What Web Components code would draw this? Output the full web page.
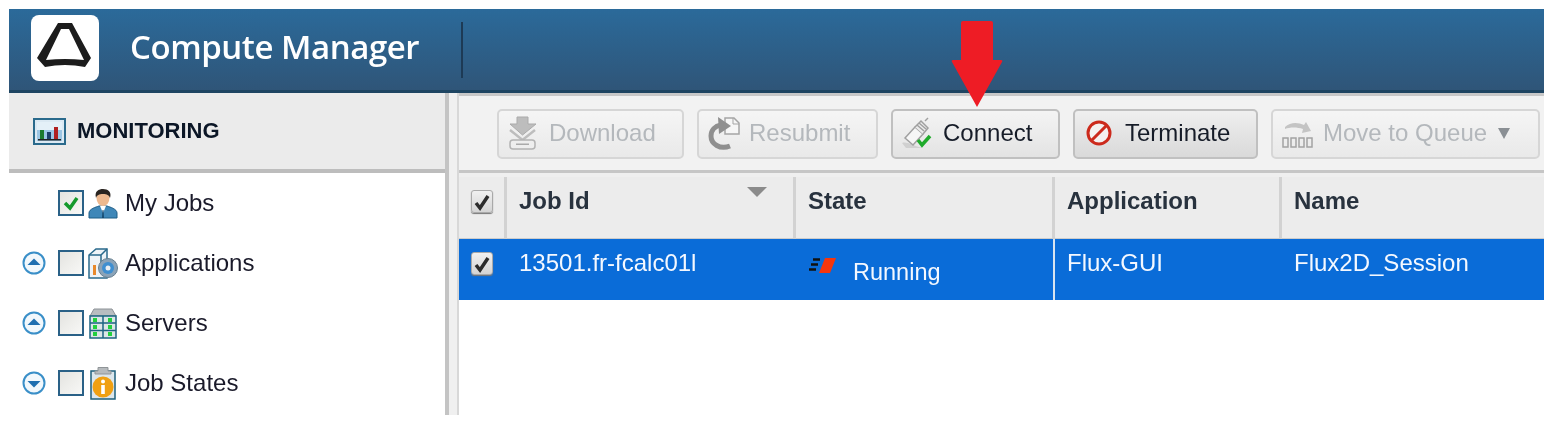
<!DOCTYPE html>
<html>
<head>
<meta charset="utf-8">
<style>
html, body { margin: 0; background: #fff; }
body { font-family: "Liberation Sans", Arial, sans-serif; overflow: hidden; }
</style>
</head>
<body>
<compute-app></compute-app>
<script>
const icons = {
    logo: `<svg width="70" height="68" viewBox="0 0 70 68"><rect x="1" y="1" width="68" height="66" rx="8" fill="#fff"/><path fill-rule="evenodd" d="M28 9H42L61 44 55 53Q35 49 15 53L7 44ZM31 15L16 46Q35 44 54 46L39 15Z" fill="#1c1c1c"/></svg>`,
    monitor: `<svg width="33" height="27" viewBox="0 0 33 27"><rect x="1" y="1" width="31" height="25" fill="#dbe9f3" stroke="#2a6a8c" stroke-width="2"/><rect x="4" y="4" width="25" height="19" fill="#9cc6e4"/><rect x="4" y="4" width="25" height="8" fill="#e4f0f8"/><rect x="7" y="12" width="4" height="9" fill="#1c7a2e"/><rect x="14" y="14" width="4" height="7" fill="#1d3f6a"/><rect x="21" y="9" width="4" height="12" fill="#b02020"/><rect x="5" y="21" width="23" height="1.5" fill="#222"/></svg>`,
    user: `<svg width="30" height="31" viewBox="0 0 30 31"><path d="M1 30V25C1 21 8 19 11 18H19C22 19 29 21 29 25V30Z" fill="#3f87b8" stroke="#1d5c86"/><path d="M12 18L15 25 18 18Z" fill="#fff"/><path d="M14.500 22H15.500L16 30H14Z" fill="#174a70"/><ellipse cx="15" cy="10" rx="6.500" ry="8" fill="#eeb98f"/><path d="M8 10C6 3 11 1 15 1 20 1 24 4 22 10 21 7 19 6 15 6 11 6 9 7 8 10Z" fill="#2a2420"/></svg>`,
    app: `<svg width="30" height="32" viewBox="0 0 30 32"><path d="M1 8L8 2H19V31H1Z" fill="#eef3f7" stroke="#2a6a8c" stroke-width="1.500"/><path d="M1 8H13L19 2M13 8V15" fill="none" stroke="#2a6a8c" stroke-width="1.500"/><rect x="5" y="18" width="3" height="10" fill="#e8892c"/><circle cx="20" cy="21" r="9.500" fill="#8aa3b8" stroke="#68808f"/><circle cx="20" cy="21" r="6" fill="#3f8fd0"/><circle cx="20" cy="21" r="2.500" fill="#e8eef2"/></svg>`,
    server: `<svg width="28" height="31" viewBox="0 0 28 31"><path d="M5 1H23L27 8H1Z" fill="#b9bdc0" stroke="#8c9296"/><rect x="1" y="8" width="26" height="22" fill="#dbe6e6" stroke="#1d6482" stroke-width="1.500"/><path d="M14 8V30M1 15H27M1 22.500H27" stroke="#1d6482" stroke-width="1.500"/><g fill="#21d03e"><rect x="4" y="10" width="4" height="4"/><rect x="19" y="10" width="4" height="4"/><rect x="4" y="17" width="4" height="4"/><rect x="19" y="17" width="4" height="4"/><rect x="4" y="24" width="4" height="4"/><rect x="19" y="24" width="4" height="4"/></g></svg>`,
    states: `<svg width="26" height="34" viewBox="0 0 26 34"><rect x="1" y="5" width="24" height="28" fill="#dce6ec" stroke="#1d5f7c" stroke-width="1.500"/><path d="M8 5V1.500H18V5H21V8H5V5Z" fill="#b6babd" stroke="#8f9497"/><circle cx="13" cy="21" r="10.500" fill="#f0a012"/><rect x="11.200" y="19" width="3.600" height="9" fill="#fff"/><circle cx="13" cy="15.500" r="2" fill="#fff"/></svg>`,
    download: `<svg width="30" height="34" viewBox="0 0 30 34"><path d="M9 1H20V8H28L14.500 19 2 8H9Z" fill="#bdbdbd" stroke="#ababab"/><path d="M2 14L14.500 24 27 14" fill="none" stroke="#bdbdbd" stroke-width="2.500"/><rect x="2" y="24" width="25" height="9" rx="3" fill="#eee" stroke="#b3b3b3" stroke-width="1.500"/><rect x="8" y="27.500" width="13" height="1.500" fill="#aaa"/></svg>`,
    resubmit: `<svg width="34" height="34" viewBox="0 0 34 34"><path d="M19 2H28L33 7V18H19Z" fill="#f6f6f6" stroke="#a5a5a5" stroke-width="1.500"/><path d="M27 2V8H33" fill="none" stroke="#a5a5a5"/><path d="M24 30C14 34 5 28 5 20 5 14 9 10 15 9" fill="none" stroke="#8f8f8f" stroke-width="5"/><path d="M12 1L25 10 13 18Z" fill="#8f8f8f"/></svg>`,
    connect: `<svg width="32" height="32" viewBox="0 0 32 32"><path d="M1 26C6 24 12 29 22 31L5 31Z" fill="#d0d0d0"/><path d="M4 21L14 10 22 17 12 28Z" fill="#f6f6f6" stroke="#a0a0a0" stroke-width="1.500"/><path d="M14 10L20 4 27 11 22 17M16 8L23 14M18 6L25 12" fill="#ececec" stroke="#a0a0a0" stroke-width="1.500"/><path d="M24 4L27 1" stroke="#a0a0a0" stroke-width="1.500"/><path d="M17 23L21 28 29 19" fill="none" stroke="#1faa2b" stroke-width="3.500"/></svg>`,
    stop: `<svg width="26" height="26" viewBox="0 0 26 26"><circle cx="13" cy="13" r="11" fill="#f4f1f0" stroke="#cc2a1c" stroke-width="3"/><path d="M6 20L20 6" stroke="#cc2a1c" stroke-width="3"/></svg>`,
    queue: `<svg width="31" height="29" viewBox="0 0 31 29"><path d="M3 8C8 3 16 3 22 6L24 3 29 12 20 14 21 10C15 8 8 8 3 10Z" fill="#c4c4c4"/><g fill="none" stroke="#a3a3a3" stroke-width="1.500"><rect x="1" y="19" width="5" height="9"/><rect x="9" y="19" width="5" height="9"/><rect x="17" y="19" width="5" height="9"/><rect x="25" y="19" width="5" height="9"/></g></svg>`,
    running: `<svg width="28" height="17" viewBox="0 0 28 17"><path d="M11 16L17 1H28L22 16Z" fill="#f5360c"/><path d="M5 2.500H12M3 7.500H10M1 12.500H8" stroke="#111" stroke-width="2.500"/></svg>`
};

class AppHeader extends HTMLElement {
    constructor() {
        super();
        this.attachShadow({mode: "open"}).innerHTML = `
<style>
:host { display: flex; align-items: center; height: 84px; box-sizing: border-box; padding: 0 0 3px 21px; border-bottom: 3px solid #1e4562;
  background: linear-gradient(#2b6a9a, #2f5578); color: #fff; }
.logo { display: flex; width: 70px; height: 68px; }
h1 { margin: 0 0 3px 30px; width: 331px; font: 600 33px "Open Sans", sans-serif; letter-spacing: -.45px; white-space: nowrap; }
.line { width: 2px; height: 56px; margin-top: 4px; background: #1d3a55; }
</style>
<span class="logo">${icons.logo}</span><h1><slot></slot></h1><span class="line"></span>`;
    }
}
customElements.define("app-header", AppHeader);

class TreeRow extends HTMLElement {
    constructor() {
        super();
        this.attachShadow({mode: "open"});
    }

    connectedCallback() {
        const toggle = this.getAttribute("toggle");
        const checked = this.hasAttribute("checked");
        const arrow = toggle === "up" ? "M5.500 14L12 7.500 18.500 14Z" : "M5.500 10L12 16.500 18.500 10Z";
        this.shadowRoot.innerHTML = `
<style>
:host { display: flex; align-items: center; height: 60px; padding-left: 13px; font-size: 24px; color: #1a1a2a; }
.toggle { display: flex; width: 24px; margin-right: 12px; }
.box { width: 22px; height: 22px; border: 2px solid #2a6187; margin-right: 4px; display: flex;
  background: linear-gradient(135deg, #e4e4e0, #f8f8f6); }
.icon { display: flex; width: 30px; justify-content: center; margin-right: 7px; }
</style>
<span class="toggle">${toggle ? `<svg width="24" height="24" viewBox="0 0 24 24"><circle cx="12" cy="12" r="10.500" fill="#f2f8fc" stroke="#3a8fc8" stroke-width="2"/><path d="${arrow}" fill="#1f6fb0"/></svg>` : ""}</span>
<span class="box">${checked ? `<svg width="22" height="22" viewBox="0 0 22 22"><path d="M5 11L10 16 17 6" fill="none" stroke="#159a2c" stroke-width="3.500"/></svg>` : ""}</span>
<span class="icon">${icons[this.getAttribute("icon")]}</span><slot></slot>`;
    }
}
customElements.define("tree-row", TreeRow);

class SidePanel extends HTMLElement {
    constructor() {
        super();
        this.attachShadow({mode: "open"}).innerHTML = `
<style>
:host { display: block; width: 436px; border-right: 4px solid #c4c4c4; background: #fff; overflow: hidden; }
.title { display: flex; align-items: center; height: 80px; box-sizing: border-box; padding-left: 24px; background: #ebebeb;
  border-bottom: 4px solid #bdbdbd; font: bold 22px "Liberation Sans", sans-serif; color: #0b1626; }
.title svg { margin-right: 11px; }
</style>
<div class="title">${icons.monitor}MONITORING</div>
<slot></slot>`;
    }
}
customElements.define("side-panel", SidePanel);

class ToolButton extends HTMLElement {
    constructor() {
        super();
        this.attachShadow({mode: "open"});
    }

    connectedCallback() {
        this.shadowRoot.innerHTML = `
<style>
:host { display: flex; align-items: center; box-sizing: border-box; height: 50px; padding: 0 0 2px 7px; border: 2px solid #c0c0c0; border-radius: 5px;
  background: linear-gradient(#f4f4f4, #e3e3e3); color: #161c28; font-size: 24px; white-space: nowrap; }
:host([disabled]) { border-color: #d6d6d6; color: #b4b8bc; background: linear-gradient(#f5f5f5, #e9e9e9); }
:host([dark]) { background: linear-gradient(#efefef, #d9d9d9); }
.icon { display: flex; justify-content: center; width: 34px; margin-right: 9px; }
.caret { margin-left: 11px; width: 0; height: 0; border: 6.500px solid transparent; border-top: 11px solid #8a8f94; border-bottom: 0; }
</style>
<span class="icon">${icons[this.getAttribute("icon")]}</span><slot></slot>${this.hasAttribute("caret") ? `<span class="caret"></span>` : ""}`;
    }
}
customElements.define("tool-button", ToolButton);

class ToolBar extends HTMLElement {
    constructor() {
        super();
        this.attachShadow({mode: "open"}).innerHTML = `
<style>
:host { display: flex; align-items: center; gap: 13px; height: 80px; box-sizing: border-box; padding: 2px 0 0 38px; background: #f2f2f2;
  border-top: 3px solid #c8c8c8; border-bottom: 3px solid #c6c6c6; }
</style>
<slot></slot>`;
    }
}
customElements.define("tool-bar", ToolBar);

class JobTable extends HTMLElement {
    constructor() {
        super();
        this.attachShadow({mode: "open"}).innerHTML = `
<style>
:host { display: grid; grid-template-columns: 48px 289px 259px 227px 1fr; grid-template-rows: 62px 61px; background: #fff; font-size: 24px; }
.head { background: #ececec; border-right: 3px solid #d2d2d2; border-bottom: 1px solid #ccc; box-sizing: border-box; padding: 10px 0 0 12px; font-weight: bold; color: #28323e; position: relative; }
.cell { background: #0a6cd8; color: #f4f8ff; box-sizing: border-box; padding: 10px 0 0 12px; }
.end { border-right: 0; }
.sep { border-right: 2px solid #d8e4f0; }
.first { padding-left: 0; padding-top: 11px; }
.check { display: block; box-sizing: border-box; width: 22px; height: 23px; margin: 2px 0 0 12px; border: 1px solid #a9a9a9; border-radius: 3px; background: linear-gradient(#f0f0f0, #d4d4d4); box-shadow: 0 1px 1px #777; }
.sort { position: absolute; right: 26px; top: 10px; width: 0; height: 0; border: 10.500px solid transparent; border-top: 10px solid #8b8b8b; border-bottom: 0; }
.state { display: flex; font-size: 23.500px; }
.state svg { margin: 8px 17px 0 0; flex: none; }
.state span { margin-top: 10px; }
</style>
<div class="head first"><span class="check">${JobTable.tick}</span></div>
<div class="head">Job Id<span class="sort"></span></div>
<div class="head">State</div>
<div class="head">Application</div>
<div class="head end">Name</div>
<div class="cell first"><span class="check">${JobTable.tick}</span></div>
<div class="cell">13501.fr-fcalc01l</div>
<div class="cell state sep">${icons.running}<span>Running</span></div>
<div class="cell">Flux-GUI</div>
<div class="cell">Flux2D_Session</div>`;
    }
}
JobTable.tick = `<svg width="20" height="21" viewBox="0 0 20 21"><path d="M4 11L8 16 16 4" fill="none" stroke="#2b2b2b" stroke-width="3.500"/></svg>`;
customElements.define("job-table", JobTable);

class ComputeApp extends HTMLElement {
    constructor() {
        super();
        this.attachShadow({mode: "open"}).innerHTML = `
<style>
:host { display: block; position: relative; width: 1535px; height: 406px; margin: 9px 0 0 9px; overflow: visible; filter: blur(.45px); }
.body { display: flex; height: 322px; background: #f0f0f0; }
.main { flex: 1; min-width: 0; display: flex; flex-direction: column; margin-left: 8px; border-left: 2px solid #d8d8d8; background: #fff; }
.table { flex: 1; border-top: 4px solid #efefef; }
.arrow { position: absolute; left: 941px; top: 11px; }
</style>
<app-header>Compute Manager</app-header>
<div class="body">
  <side-panel>
    <tree-row icon="user" checked>My Jobs</tree-row>
    <tree-row icon="app" toggle="up">Applications</tree-row>
    <tree-row icon="server" toggle="up">Servers</tree-row>
    <tree-row icon="states" toggle="down">Job States</tree-row>
  </side-panel>
  <div class="main">
    <tool-bar>
      <tool-button icon="download" disabled style="width:187px">Download</tool-button>
      <tool-button icon="resubmit" disabled style="width:181px">Resubmit</tool-button>
      <tool-button icon="connect" style="width:169px">Connect</tool-button>
      <tool-button icon="stop" dark style="width:185px">Terminate</tool-button>
      <tool-button icon="queue" disabled caret style="width:269px">Move to Queue</tool-button>
    </tool-bar>
    <div class="table"><job-table></job-table></div>
  </div>
</div>
<svg class="arrow" width="54" height="88" viewBox="0 0 54 88"><path d="M11 3Q11 1 13 1H41Q43 1 43 3V40H51Q53 40 52 42L27 87 2 42Q1 40 3 40H11Z" fill="#ee1c25"/></svg>`;
    }
}
customElements.define("compute-app", ComputeApp);
</script>
</body>
</html>
